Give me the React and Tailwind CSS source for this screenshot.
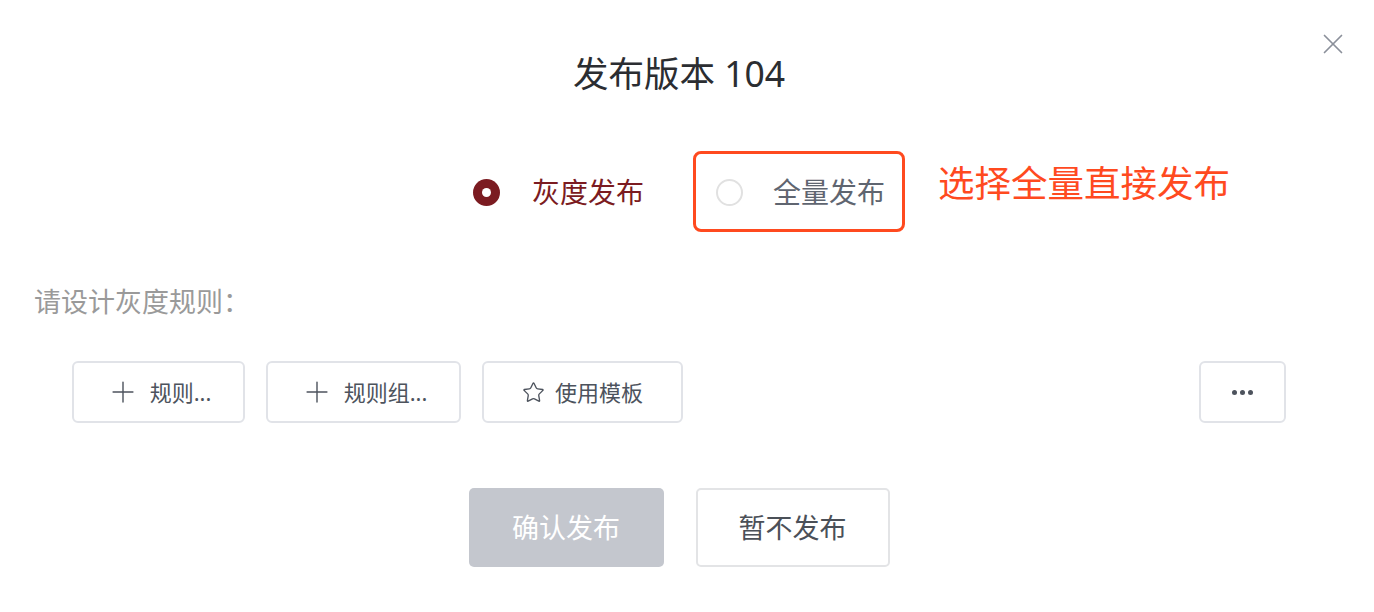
import { Plus, Star, X } from "lucide-react";

const font = { fontFamily: '"Noto Sans", "Noto Sans CJK SC", sans-serif' };

function ToolButton({ icon, label, width }) {
  return (
    <button
      className={`h-[62px] ${width} flex items-center justify-center gap-[10px] rounded-[6px] border-2 border-[#e1e3e8] bg-white text-[22px] leading-none text-[#4d535d]`}
    >
      {icon}
      <span>{label}</span>
    </button>
  );
}

export default function App() {
  return (
    <div className="relative w-[1358px] h-[612px] bg-white flex flex-col" style={font}>
      {/* Close */}
      <button className="absolute left-[1316px] top-[27px] text-[#8b909a]">
        <X size={34} strokeWidth={1.2} />
      </button>

      {/* Title */}
      <h1 className="mt-[53px] h-[40px] text-center text-[35.5px] leading-[40px] font-normal text-[#2b2d31]">
        发布版本 104
      </h1>

      {/* Radio row */}
      <div className="mt-[73px] h-[52px] flex items-center justify-center gap-[72px]">
        <label className="flex items-center gap-[32px]">
          <span className="w-[27px] h-[27px] rounded-full bg-[#7b1b21] flex items-center justify-center">
            <span className="w-[9px] h-[9px] rounded-full bg-white" />
          </span>
          <span className="text-[28px] leading-none text-[#7b1b21]">灰度发布</span>
        </label>
        <label className="relative h-full flex items-center gap-[30px]">
          <span className="absolute -top-[15px] -bottom-[14px] -left-[23px] -right-[20px] rounded-[8px] border-[3px] border-[#ff4a1f]" />
          <span className="w-[27px] h-[27px] rounded-full border-2 border-[#e1e1e1] bg-white" />
          <span className="text-[28px] leading-none text-[#5f6570]">全量发布</span>
          <span className="absolute left-[222px] -top-[1px] whitespace-nowrap text-[36.5px] leading-[36px] text-[#ff4a1f]">
            选择全量直接发布
          </span>
        </label>
      </div>

      {/* Rule label */}
      <div className="mt-[69px] h-[30px] pl-[34px] text-[27px] leading-[30px] text-[#9a9a9a]">
        请设计灰度规则：
      </div>

      {/* Tool buttons */}
      <div className="mt-[44px] px-[72px] flex items-center justify-between">
        <div className="flex gap-[21px]">
          <ToolButton width="w-[173px]" icon={<Plus size={34} strokeWidth={1} />} label="规则..." />
          <ToolButton width="w-[195px]" icon={<Plus size={34} strokeWidth={1} />} label="规则组..." />
          <ToolButton width="w-[201px]" icon={<Star size={23} strokeWidth={1.4} />} label="使用模板" />
        </div>
        <button className="w-[87px] h-[62px] flex items-center justify-center gap-[3px] rounded-[6px] border-2 border-[#e1e3e8] bg-white">
          <span className="w-[5px] h-[5px] rounded-full bg-[#4d535d]" />
          <span className="w-[5px] h-[5px] rounded-full bg-[#4d535d]" />
          <span className="w-[5px] h-[5px] rounded-full bg-[#4d535d]" />
        </button>
      </div>

      {/* Footer */}
      <div className="mt-[65px] flex justify-center gap-[32px]">
        <button className="w-[195px] h-[79px] rounded-[5px] bg-[#c4c7ce] text-[27px] leading-none text-white">
          确认发布
        </button>
        <button className="w-[194px] h-[79px] rounded-[5px] border-2 border-[#e3e4e6] bg-white text-[27px] leading-none text-[#4b5058]">
          暂不发布
        </button>
      </div>
    </div>
  );
}
